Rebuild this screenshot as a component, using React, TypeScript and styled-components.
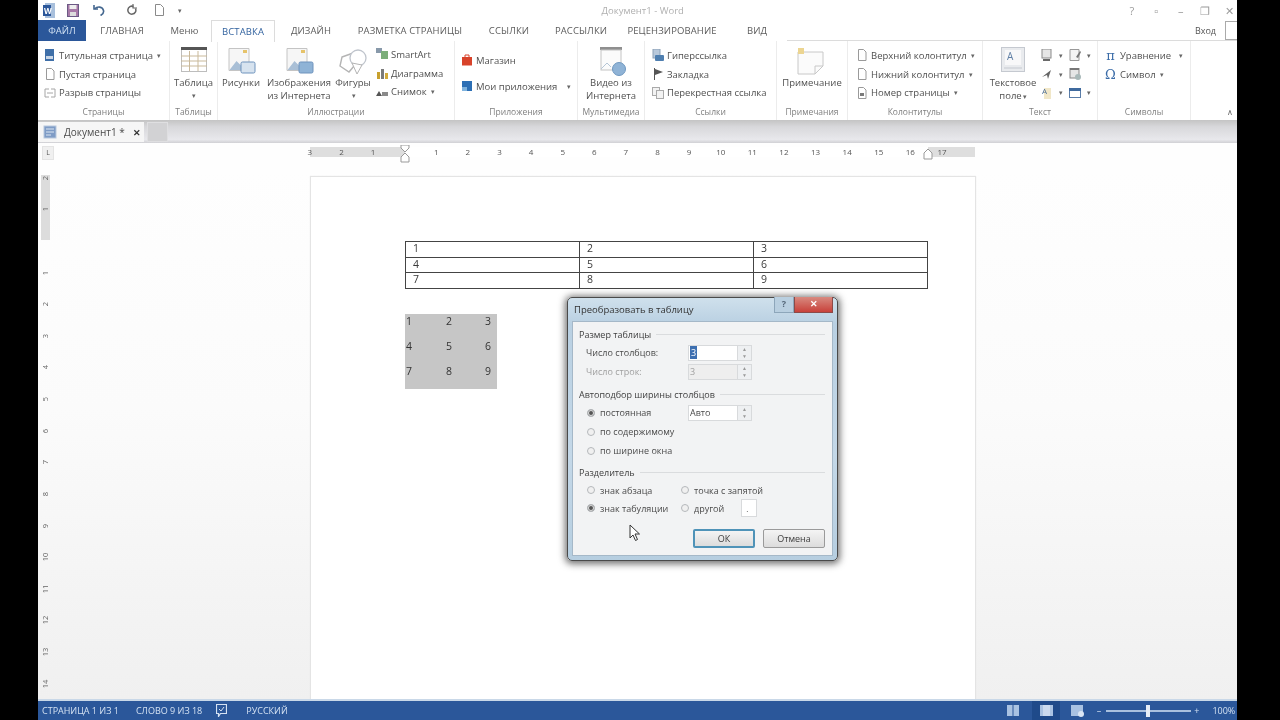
import React from "react";
import styled, { createGlobalStyle } from "styled-components";

const Global = createGlobalStyle`
  html, body { margin: 0; padding: 0; background: #000; overflow: hidden; }
  * { box-sizing: border-box; }
`;

const Screen = styled.div`
  width: 1280px; height: 720px; background: #000; padding-left: 38px; overflow: hidden;
  font-family: "Open Sans", "Liberation Sans", sans-serif;
`;
const Win = styled.div`
  position: relative; width: 1199px; height: 720px; background: #fff; display: flex; flex-direction: column;
  overflow: hidden; filter: blur(0.7px); color: #555;
`;

/* title bar */
const TitleBar = styled.div`height: 20px; display: flex; align-items: center; flex: none; background: #fff; position: relative;`;
const Qat = styled.div`display: flex; align-items: center; height: 20px;`;
const QatSlot = styled.div<{ $w: number }>`width: ${p => p.$w}px; display: flex; justify-content: center; align-items: center;`;
const DocTitle = styled.div`flex: 1; text-align: center; font-size: 9.5px; color: #b0b0b0; padding-right: 26px;`;
const WinBtns = styled.div`display: flex; align-items: center; color: #9c9c9c; font-size: 11px; margin-right: -5px;`;
const WinBtn = styled.div`width: 24.5px; display: flex; justify-content: center;`;

/* tabs */
const TabBar = styled.div`height: 21px; display: flex; flex: none; position: relative; background: #fff; border-bottom: 1px solid #dcdcdc;`;
const FileTab = styled.div`width: 48px; height: 21px; background: #2b579a; color: #cfe0f3; font-size: 9.5px; display: flex; align-items: center; justify-content: center;`;
const Tab = styled.div<{ $w: number; $active?: boolean }>`
  width: ${p => p.$w}px; height: ${p => (p.$active ? 22 : 21)}px; display: flex; align-items: center; justify-content: center;
  font-size: 9.5px; color: #5c5c5c; letter-spacing: .1px; white-space: nowrap;
  background: #fff; z-index: 1;
  ${p => p.$active ? "border: 1px solid #dcdcdc; border-bottom: none; color: #33639f;" : ""}
`;
const SignIn = styled.div`margin-left: auto; display: flex; align-items: center; font-size: 9px; color: #555; gap: 9px;`;
const Avatar = styled.div`width: 12px; height: 19px; border: 1px solid #aaa; border-right: none; background: #fff;`;

/* ribbon */
const Ribbon = styled.div`height: 79px; flex: none; display: flex; background: #fff;`;
const Group = styled.div<{ $w: number; $plain?: boolean }>`
  width: ${p => p.$w}px; flex: none; display: flex; flex-direction: column; height: 79px;
  border-right: ${p => (p.$plain ? "none" : "1px solid #ececec")};
`;
const GroupBody = styled.div<{ $pt?: number; $pl?: number }>`
  height: 63px; display: flex; padding-top: ${p => p.$pt ?? 4}px; padding-left: ${p => p.$pl ?? 0}px;
`;
const GroupLabel = styled.div`height: 16px; text-align: center; font-size: 8.5px; color: #808080; line-height: 15px; white-space: nowrap;`;
const Collapse = styled.div`height: 16px; text-align: right; padding-right: 4px; font-size: 8px; color: #666; line-height: 15px;`;
const RowStack = styled.div<{ $gap?: number; $pl?: number }>`
  display: flex; flex-direction: column; gap: ${p => p.$gap ?? 0}px; padding-left: ${p => p.$pl ?? 0}px;
`;
const SmallRow = styled.div`height: 18.7px; display: flex; align-items: center; gap: 3px; font-size: 9.5px; color: #505050; white-space: nowrap;`;
const Caret = styled.span`font-size: 7px; color: #666; margin-left: 1px;`;
const Big = styled.div<{ $w: number }>`
  width: ${p => p.$w}px; flex: none; display: flex; flex-direction: column; align-items: center;
  font-size: 9.5px; line-height: 13px; color: #505050; text-align: center; white-space: nowrap;
`;
const BigIcon = styled.div`height: 31px; padding-top: 2px; display: flex; align-items: flex-start; justify-content: center;`;
const BigText = styled.div`line-height: 13px;`;
const MiniCol = styled.div<{ $w: number }>`display: flex; flex-direction: column; width: ${p => p.$w}px; padding-top: 1px;`;
const MiniCell = styled.div`height: 18.7px; display: flex; align-items: center; gap: 5px;`;
const MathGlyph = styled.span`font-family: "DejaVu Serif", serif; font-size: 13px; color: #3b6ca8; width: 13px; text-align: center;`;

/* doc tabs */
const DocTabs = styled.div`
  height: 23px; flex: none; display: flex; align-items: flex-end; gap: 3px;
  background: linear-gradient(#c4c4c4 0, #d8d8db 30%, #e8e8ec 85%, #d0d0d4 100%); padding-bottom: 1px;
`;
const DocTab = styled.div`width: 106px; height: 20px; background: #f6f6f6; display: flex; align-items: center; padding-left: 5px; gap: 7px; font-size: 10px; color: #4a4a4a;`;
const DocClose = styled.span`font-size: 9px; margin-left: 1px; color: #333; font-weight: 700;`;
const NewTab = styled.div`width: 21px; height: 20px; background: #d2d2d4; border: 1px solid #dfdfe1;`;

/* ruler */
const RulerRow = styled.div`height: 27px; flex: none; display: flex; background: #fefefe;`;
const Corner = styled.div`width: 12px; height: 14px; margin: 3px 0 0 4px; background: #f0f0f0; border: 1px solid #e4e4e4; font-size: 7px; color: #555; text-align: center; line-height: 11px;`;
const Track = styled.div`
  margin: 4px 0 0 256px; width: 665px; height: 10px; display: flex; position: relative;
  background: linear-gradient(90deg, #dedede 0 95px, #fff 95px 618px, #dedede 618px);
`;
const TrackCells = styled.div`display: flex; margin-left: -16px;`;
const RCell = styled.div`width: 31.62px; text-align: center; font-size: 8px; line-height: 10px; color: #555; flex: none;`;
const Indent = styled.svg`position: absolute; left: 89px; top: -2px;`;
const Indent2 = styled.svg`position: absolute; left: 613px; top: 1px;`;

/* workspace */
const Workspace = styled.div`
  flex: 1; min-height: 0; display: flex; overflow: hidden; background: linear-gradient(#fefefe 0, #fbfbfb 45%, #f0f0f0 100%);
`;
const VRuler = styled.div`width: 17px; flex: none; margin: -8px 256px 0 0; position: relative;`;
const VGray = styled.div`position: absolute; left: 3px; top: 13px; width: 9px; height: 65px; background: #dcdcdc;`;
const VCell = styled.div`
  height: 31.62px; display: flex; align-items: center; justify-content: center; position: relative; width: 13px; margin-left: 1px;
  font-size: 7.5px; color: #666;
`;
const VText = styled.span`transform: rotate(-90deg); display: block;`;
const Page = styled.div`
  width: 664px; height: 560px; margin-top: 7px; background: #fff; flex: none; padding: 64px 0 0 94px;
  box-shadow: 0 0 1px 1px #e4e4e4; color: #333;
`;
const DocTable = styled.div`
  width: 523px; height: 47.5px; display: grid; grid-template-columns: repeat(3, 1fr); grid-template-rows: repeat(3, 1fr);
  border-top: 1.5px solid #444; border-left: 1.5px solid #444;
`;
const DocCell = styled.div`
  border-right: 1.5px solid #444; border-bottom: 1.5px solid #444; padding-left: 7px; font-size: 10.5px; line-height: 13px; color: #3a3a3a;
`;
const Selection = styled.div`
  width: 92px; height: 75px; margin-top: 25px; background: #c6c6c6; display: grid;
  grid-template-columns: 40px 39px 13px; grid-auto-rows: 25px; font-size: 10.5px; line-height: 14px; color: #333;
`;
const SelCell = styled.div`padding-left: 1px;`;

/* status */
const Status = styled.div`
  height: 21px; flex: none; background: #2b579a; border-top: 2px solid #c9d8e8; display: flex; align-items: center;
  color: #d3e1f2; font-size: 9px; padding-left: 4px; white-space: nowrap;
`;
const StatusItem = styled.div<{ $ml?: number }>`margin-left: ${p => p.$ml ?? 0}px; display: flex; align-items: center;`;
const ViewBtn = styled.div<{ $on?: boolean; $w: number }>`
  width: ${p => p.$w}px; height: 19px; display: flex; align-items: center; justify-content: center;
  background: ${p => (p.$on ? "#1f4a8a" : "transparent")};
`;
const Slider = styled.div`width: 85px; height: 2px; background: #a9c0de; position: relative; margin: 0 3px;`;
const Thumb = styled.div`position: absolute; left: 40px; top: -5px; width: 4px; height: 12px; background: #e6edf6;`;

/* dialog */
const Dialog = styled.div`
  position: absolute; left: 529px; top: 297px; width: 271px; height: 264px; border-radius: 5px;
  background: linear-gradient(#cfe0ec, #b9d0e2 10%, #c4d8e8 60%, #b6cee0);
  border: 1px solid #4a4a4a; padding: 0 4px 4px;
  box-shadow: 0 1px 7px 2px rgba(40,40,40,.65); display: flex; flex-direction: column;
`;
const DlgTitle = styled.div`height: 23px; flex: none; display: flex; align-items: center; font-size: 9.5px; color: #333; padding: 0 0 0 2px; position: relative;`;
const DlgBtns = styled.div`position: absolute; right: 0; top: -1px; display: flex;`;
const HelpBtn = styled.div`width: 20px; height: 16px; background: #b9cfe0; border: 1px solid #8da6ba; border-top: none; font-size: 9px; text-align: center; color: #56687a; font-weight: 700; line-height: 14px;`;
const CloseBtn = styled.div`width: 39px; height: 16px; background: linear-gradient(#d88a80, #c8413a); border: 1px solid #8c4a48; border-top: none; color: #fff; font-size: 9px; text-align: center; font-weight: 700; line-height: 14px;`;
const DlgBody = styled.div`flex: 1; background: #f2f3f4; border: 1px solid #a5b8c8; padding: 3px 7px 0 6px; display: flex; flex-direction: column; font-size: 9px; color: #4a4a4a;`;
const Heading = styled.div<{ $mt?: number }>`
  height: 18px; margin-top: ${p => p.$mt ?? 0}px; display: flex; align-items: center; gap: 5px; font-size: 9px; color: #404040; white-space: nowrap;
  &::after { content: ""; flex: 1; height: 1px; background: #dadcde; }
`;
const DlgRow = styled.div<{ $h?: number; $muted?: boolean }>`
  height: ${p => p.$h ?? 19}px; display: flex; align-items: center; padding-left: 7px; white-space: nowrap;
  color: ${p => (p.$muted ? "#a0a0a0" : "#4a4a4a")};
`;
const FieldLabel = styled.div`width: 102px;`;
const Spin = styled.div<{ $muted?: boolean }>`
  width: 64px; height: 16px; display: flex; background: ${p => (p.$muted ? "#eeeeee" : "#fff")}; border: 1px solid #d8dadc; color: inherit; line-height: 14px; padding-left: 1px;
`;
const SpinText = styled.div`flex: 1; font-size: 9px;`;
const Caretbox = styled.span`background: #3d6fb0; color: #fff; padding: 0 1px;`;
const SpinArrows = styled.div`width: 14px; border-left: 1px solid #d8dadc; background: #eef0f2; color: #9a9a9a; font-size: 5px; line-height: 7px; text-align: center;`;
const RadioRow = styled.div<{ $w?: number }>`display: flex; align-items: center; gap: 5px; padding-left: 1px; ${p => (p.$w ? `width: ${p.$w}px;` : "")}`;
const Radio = styled.div<{ $on?: boolean }>`
  width: 8px; height: 8px; border-radius: 50%; border: 1px solid #b5b8bb; flex: none;
  background: ${p => (p.$on ? "#555" : "#f0f0f0")}; ${p => (p.$on ? "box-shadow: inset 0 0 0 1px #ddd;" : "")}
`;
const OtherBox = styled.div`width: 16px; height: 18px; margin-left: 17px; background: #fff; border: 1px solid #d8dadc; font-size: 8px; line-height: 18px; padding-left: 4px;`;
const DlgFoot = styled.div`display: flex; justify-content: flex-end; gap: 8px; margin-top: 12px; padding-right: 0;`;
const DlgButton = styled.div<{ $primary?: boolean }>`
  width: 62px; height: 19px; border-radius: 2px; font-size: 9px; color: #3c3c3c; display: flex; align-items: center; justify-content: center;
  background: linear-gradient(#f4f4f4, #dcdcdc); border: ${p => (p.$primary ? "2px solid #4f93b8" : "1px solid #9a9a9a")};
`;
const Pointer = styled.svg`position: absolute; left: 591px; top: 524px;`;

/* icons */
const Sv = ({ w = 12, h = 12, children }: { w?: number; h?: number; children: React.ReactNode }) => (
  <svg width={w} height={h} viewBox={`0 0 ${w} ${h}`} fill="none">{children}</svg>
);
const DocI = ({ c = "#9a9a9a", fill = "#fff" }: { c?: string; fill?: string }) => (
  <Sv><path d="M2.5 .5h5l2.5 2.5v8.5h-7.5z" fill={fill} stroke={c} /></Sv>
);
const CoverI = () => (
  <Sv><rect x="1" y="0" width="9" height="12" fill="#3f6fa8" /><rect x="2" y="7" width="7" height="3" fill="#c9d6e6" /></Sv>
);
const BreakI = () => (
  <Sv><path d="M5 2H1v8h4M7 2h4v8H7M3 6h6" stroke="#a6a6a6" /></Sv>
);
const PicBig = ({ badge }: { badge: string }) => (
  <Sv w={30} h={30}>
    <path d="M3 1.5h20v22h-20z" fill="#f6f6f6" stroke="#c4c4c4" />
    <rect x="17" y="3" width="4" height="3" fill="#e6c36a" />
    <path d="M3.5 23l7-9 5 5 3-3 4 7z" fill="#a9bfd6" />
    <rect x="15" y="15" width="14" height="11" rx="1.5" fill={badge} stroke="#6e93bd" />
  </Sv>
);
const TableBig = () => (
  <Sv w={26} h={26}>
    <rect x=".5" y=".5" width="25" height="24" fill="#fff" stroke="#bdbdbd" />
    <rect x="0" y="0" width="26" height="3" fill="#555" />
    <path d="M0 9h26M0 14h26M0 19h26M8.5 4v20M17 4v20" stroke="#c9b99a" />
  </Sv>
);
const ShapesBig = () => (
  <Sv w={30} h={30}>
    <path d="M4 10l14-5 3 8-10 12-9-6z" fill="#fff" stroke="#b4b4b4" strokeWidth="1.4" />
    <circle cx="20" cy="11" r="8" fill="#fff" stroke="#bfc4cc" strokeWidth="1.3" />
    <path d="M14 16l10 2-5 9z" fill="#fff" stroke="#b4b4b4" />
  </Sv>
);
const SmartI = () => (
  <Sv><rect x="0" y="0" width="6" height="5" fill="#89a" /><rect x="5" y="3" width="7" height="8" fill="#7cae7a" /></Sv>
);
const ChartI = () => (
  <Sv><rect x="1" y="5" width="3" height="7" fill="#c8a12e" /><rect x="5" y="2" width="3" height="10" fill="#7a7a7a" /><rect x="9" y="6" width="3" height="6" fill="#d2aa3a" /></Sv>
);
const ShotI = () => (
  <Sv><path d="M0 10l3-5 3 5z" fill="#555" /><rect x="6" y="6" width="6" height="4" fill="#8a8a8a" /></Sv>
);
const StoreI = () => (
  <Sv><path d="M1 3h10v8.5H1z" fill="#d8432a" /><path d="M4 3V1h4v2" stroke="#d8432a" /></Sv>
);
const AppsI = () => (
  <Sv><rect x="1" y="1" width="10" height="10" fill="#2c6fb5" /><rect x="1" y="7" width="5" height="4" fill="#7fb3de" /></Sv>
);
const VideoBig = () => (
  <Sv w={30} h={30}>
    <rect x="4" y="0" width="22" height="3" fill="#8f8f8f" />
    <rect x="5" y="3" width="20" height="20" fill="#fbfbfb" stroke="#c4c4c4" />
    <circle cx="23" cy="22" r="6.5" fill="#8fb3d6" stroke="#6f98c0" />
    <path d="M5 22l6-6 4 4" stroke="#b6c6d6" />
  </Sv>
);
const LinkI = () => (
  <Sv><rect x="1" y="0" width="7" height="9" fill="#b9c9db" stroke="#8da2b8" /><rect x="3" y="6" width="9" height="6" rx="1" fill="#4f7fb0" /></Sv>
);
const FlagI = () => (
  <Sv><path d="M2.5 0v12" stroke="#555" /><path d="M3 1l8 3-8 3z" fill="#555" /></Sv>
);
const CrossI = () => (
  <Sv><rect x=".5" y=".5" width="7" height="8" fill="#f3f3f3" stroke="#aaa" /><rect x="4.5" y="3.5" width="7" height="8" fill="#f3f3f3" stroke="#aaa" /></Sv>
);
const NoteBig = () => (
  <Sv w={30} h={30}>
    <path d="M1 5h25v14l-8 8H1z" fill="#fbfbfb" stroke="#c8c8c8" />
    <path d="M18 27v-8h8" stroke="#c8c8c8" />
    <rect x="1" y="1" width="6" height="6" fill="#ecd591" />
  </Sv>
);
const PageNumI = () => (
  <Sv><path d="M2.5 .5h5l2.5 2.5v8.5h-7.5z" fill="#fff" stroke="#9a9a9a" /><rect x="4" y="6" width="4" height="3" fill="#7a7a7a" /></Sv>
);
const TextBoxBig = () => (
  <Sv w={24} h={25}>
    <rect x=".5" y=".5" width="23" height="24" fill="#e9ebee" stroke="#c5c9d0" />
    <rect x="4" y="3" width="16" height="15" fill="#f8f8f9" />
    <text x="6" y="13" fontSize="10" fill="#5f7fa5" fontFamily="Open Sans">A</text>
    <path d="M3 21h18" stroke="#c5c9d0" />
  </Sv>
);
const BlockI = ({ c = "#8a8a8a" }: { c?: string }) => (
  <Sv><rect x="1" y="0" width="9" height="9" fill="#e6e6e6" stroke={c} /><rect x="2" y="10" width="7" height="2" fill="#6a6a6a" /></Sv>
);
const SigI = () => (
  <Sv><path d="M1 9l9-7-3 9-1-4z" fill="#666" /></Sv>
);
const ObjI = () => (
  <Sv><path d="M1 .5h9v11H1z" fill="#f4f4f4" stroke="#999" /><path d="M7 8l4-6 1 1-3 6z" fill="#777" /></Sv>
);
const CalI = () => (
  <Sv><rect x="1" y="0" width="9" height="10" fill="#e6e6e6" stroke="#888" /><rect x="1" y="0" width="9" height="2" fill="#777" /><circle cx="9" cy="9" r="3" fill="#a9b9b9" /></Sv>
);
const DropI = () => (
  <Sv><rect x="3" y="1" width="7" height="11" fill="#f1e7c8" /><text x="1" y="7" fontSize="8" fill="#4f6f95" fontFamily="Open Sans">A</text></Sv>
);
const DateI = () => (
  <Sv><rect x=".5" y="1.5" width="11" height="9" fill="#fff" stroke="#5a7da8" /><rect x="0" y="1" width="12" height="3" fill="#3f6a9e" /></Sv>
);
const WordI = () => (
  <Sv w={12} h={15}>
    <rect x="2" y="0" width="10" height="15" fill="#a9c0dc" />
    <rect x="0" y="2" width="8" height="11" fill="#2b579a" />
    <text x="1" y="10.5" fontSize="8" fontWeight="700" fill="#fff" fontFamily="Open Sans">W</text>
  </Sv>
);
const SaveI = () => (
  <Sv w={12} h={13}>
    <rect x=".5" y=".5" width="11" height="12" fill="#a87aa8" stroke="#6c5a85" />
    <rect x="2.5" y="1" width="7" height="4" fill="#eee" />
    <rect x="3" y="8" width="6" height="4" fill="#ddd" />
  </Sv>
);
const UndoI = () => (
  <Sv w={13} h={12}>
    <path d="M1 1v4h4" stroke="#44678f" strokeWidth="1.6" />
    <path d="M1.5 5c3-3 8-2.5 9 1.5.6 2.5-1 4-3 5" stroke="#44678f" strokeWidth="1.6" />
  </Sv>
);
const RedoI = () => (
  <Sv w={11} h={12}>
    <path d="M8.5 4.5a4 4 0 1 1-2-2" stroke="#666" strokeWidth="1.5" />
    <path d="M6 0v4h4" stroke="#666" strokeWidth="1.2" />
  </Sv>
);
const SmallDocI = () => (
  <Sv w={9} h={12}><path d="M.5 .5h5l3 3v8h-8z" fill="#fff" stroke="#8a8a8a" /></Sv>
);
const SpellI = () => (
  <Sv w={11} h={13}><path d="M.5 .5h10v9h-6l-2 3v-3h-2z" stroke="#d5e2f3" strokeWidth="1.2" /><path d="M3 5l2 2 3-4" stroke="#d5e2f3" /></Sv>
);
const ViewI = ({ kind }: { kind: number }) => (
  <Sv w={13} h={13}>
    <rect x="0" y="1" width={kind === 1 ? 13 : 12} height="11" fill="#a9c2e2" />
    {kind === 0 && <path d="M6 1v11" stroke="#2b579a" />}
    {kind === 1 && <rect x="3" y="1" width="7" height="11" fill="#cbdaee" />}
    {kind === 2 && <circle cx="10" cy="10" r="3" fill="#dbe6f4" />}
  </Sv>
);

const tabs: [string, number, boolean?][] = [
  ["ГЛАВНАЯ", 72], ["Меню", 53], ["ВСТАВКА", 64, true], ["ДИЗАЙН", 72], ["РАЗМЕТКА СТРАНИЦЫ", 126],
  ["ССЫЛКИ", 72], ["РАССЫЛКИ", 72], ["РЕЦЕНЗИРОВАНИЕ", 110], ["ВИД", 60],
];
const hNums = ["3", "2", "1", "", "1", "2", "3", "4", "5", "6", "7", "8", "9", "10", "11", "12", "13", "14", "15", "16", "17"];
const vNums = ["2", "1", "", "1", "2", "3", "4", "5", "6", "7", "8", "9", "10", "11", "12", "13", "14"];

export default function App() {
  return (
    <Screen>
      <Global />
      <Win>
        <TitleBar>
          <Qat>
            <QatSlot $w={22}><WordI /></QatSlot>
            <QatSlot $w={26}><SaveI /></QatSlot>
            <QatSlot $w={26}><UndoI /></QatSlot>
            <QatSlot $w={40}><RedoI /></QatSlot>
            <QatSlot $w={14}><SmallDocI /></QatSlot>
            <QatSlot $w={26}><Caret>▾</Caret></QatSlot>
          </Qat>
          <DocTitle>Документ1 - Word</DocTitle>
          <WinBtns>
            <WinBtn>?</WinBtn>
            <WinBtn>▫</WinBtn>
            <WinBtn>–</WinBtn>
            <WinBtn>❐</WinBtn>
            <WinBtn>✕</WinBtn>
          </WinBtns>
        </TitleBar>
        <TabBar>
          <FileTab>ФАЙЛ</FileTab>
          {tabs.map(([t, w, a]) => <Tab key={t} $w={w} $active={a}>{t}</Tab>)}
          <SignIn>Вход<Avatar /></SignIn>
        </TabBar>
        <Ribbon>
          <Group $w={132}>
            <GroupBody $pt={5} $pl={6}>
              <RowStack>
                <SmallRow><CoverI />Титульная страница<Caret>▾</Caret></SmallRow>
                <SmallRow><DocI />Пустая страница</SmallRow>
                <SmallRow><BreakI />Разрыв страницы</SmallRow>
              </RowStack>
            </GroupBody>
            <GroupLabel>Страницы</GroupLabel>
          </Group>
          <Group $w={48}>
            <GroupBody>
              <Big $w={47}><BigIcon><TableBig /></BigIcon><BigText>Таблица</BigText><Caret>▾</Caret></Big>
            </GroupBody>
            <GroupLabel>Таблицы</GroupLabel>
          </Group>
          <Group $w={237}>
            <GroupBody>
              <Big $w={46}><BigIcon><PicBig badge="#d7e3ef" /></BigIcon><BigText>Рисунки</BigText></Big>
              <Big $w={70}><BigIcon><PicBig badge="#8fb3d6" /></BigIcon><BigText>Изображения<br />из Интернета</BigText></Big>
              <Big $w={38}><BigIcon><ShapesBig /></BigIcon><BigText>Фигуры</BigText><Caret>▾</Caret></Big>
              <RowStack $pl={4}>
                <SmallRow><SmartI />SmartArt</SmallRow>
                <SmallRow><ChartI />Диаграмма</SmallRow>
                <SmallRow><ShotI />Снимок<Caret>▾</Caret></SmallRow>
              </RowStack>
            </GroupBody>
            <GroupLabel>Иллюстрации</GroupLabel>
          </Group>
          <Group $w={123}>
            <GroupBody $pt={10} $pl={6}>
              <RowStack $gap={7}>
                <SmallRow><StoreI />Магазин</SmallRow>
                <SmallRow><AppsI />Мои приложения<Caret>&nbsp;&nbsp;&nbsp;▾</Caret></SmallRow>
              </RowStack>
            </GroupBody>
            <GroupLabel>Приложения</GroupLabel>
          </Group>
          <Group $w={67}>
            <GroupBody>
              <Big $w={66}><BigIcon><VideoBig /></BigIcon><BigText>Видео из<br />Интернета</BigText></Big>
            </GroupBody>
            <GroupLabel>Мультимедиа</GroupLabel>
          </Group>
          <Group $w={132}>
            <GroupBody $pt={5} $pl={7}>
              <RowStack>
                <SmallRow><LinkI />Гиперссылка</SmallRow>
                <SmallRow><FlagI />Закладка</SmallRow>
                <SmallRow><CrossI />Перекрестная ссылка</SmallRow>
              </RowStack>
            </GroupBody>
            <GroupLabel>Ссылки</GroupLabel>
          </Group>
          <Group $w={71}>
            <GroupBody>
              <Big $w={70}><BigIcon><NoteBig /></BigIcon><BigText>Примечание</BigText></Big>
            </GroupBody>
            <GroupLabel>Примечания</GroupLabel>
          </Group>
          <Group $w={135}>
            <GroupBody $pt={5} $pl={8}>
              <RowStack>
                <SmallRow><DocI />Верхний колонтитул<Caret>▾</Caret></SmallRow>
                <SmallRow><DocI />Нижний колонтитул<Caret>▾</Caret></SmallRow>
                <SmallRow><PageNumI />Номер страницы<Caret>▾</Caret></SmallRow>
              </RowStack>
            </GroupBody>
            <GroupLabel>Колонтитулы</GroupLabel>
          </Group>
          <Group $w={115}>
            <GroupBody $pl={2}>
              <Big $w={56}><BigIcon><TextBoxBig /></BigIcon><BigText>Текстовое<br />поле<Caret>▾</Caret></BigText></Big>
              <MiniCol $w={28}>
                <MiniCell><BlockI /><Caret>▾</Caret></MiniCell>
                <MiniCell><SigI /><Caret>▾</Caret></MiniCell>
                <MiniCell><DropI /><Caret>▾</Caret></MiniCell>
              </MiniCol>
              <MiniCol $w={26}>
                <MiniCell><ObjI /><Caret>▾</Caret></MiniCell>
                <MiniCell><CalI /></MiniCell>
                <MiniCell><DateI /><Caret>▾</Caret></MiniCell>
              </MiniCol>
            </GroupBody>
            <GroupLabel>Текст</GroupLabel>
          </Group>
          <Group $w={93}>
            <GroupBody $pt={5} $pl={6}>
              <RowStack>
                <SmallRow><MathGlyph>π</MathGlyph>Уравнение<Caret>&nbsp;&nbsp;▾</Caret></SmallRow>
                <SmallRow><MathGlyph>Ω</MathGlyph>Символ<Caret>▾</Caret></SmallRow>
              </RowStack>
            </GroupBody>
            <GroupLabel>Символы</GroupLabel>
          </Group>
          <Group $w={46} $plain>
            <GroupBody />
            <Collapse>∧</Collapse>
          </Group>
        </Ribbon>
        <DocTabs>
          <DocTab>
            <Sv w={14} h={14}><rect x="1" y="1" width="12" height="12" fill="#7f9cc6" stroke="#b8c8dd" /><path d="M3 4h8M3 7h8M3 10h5" stroke="#dce6f2" /></Sv>
            Документ1 *<DocClose>✕</DocClose>
          </DocTab>
          <NewTab />
        </DocTabs>
        <RulerRow>
          <Corner>L</Corner>
          <Track>
            <TrackCells>
              {hNums.map((n, i) => <RCell key={i}>{n}</RCell>)}
            </TrackCells>
            <Indent width="12" height="18" viewBox="0 0 12 18" fill="none">
              <path d="M2 0h8v3l-4 4-4-4z M6 8l4 4v5H2v-5z" fill="#fff" stroke="#999" />
            </Indent>
            <Indent2 width="10" height="12" viewBox="0 0 10 12" fill="none">
              <path d="M5 1l4 4v6H1V5z" fill="#fff" stroke="#999" />
            </Indent2>
          </Track>
        </RulerRow>
        <Workspace>
          <VRuler>
            <VGray />
            {vNums.map((n, i) => <VCell key={i}><VText>{n}</VText></VCell>)}
          </VRuler>
          <Page>
            <DocTable>
              {["1", "2", "3", "4", "5", "6", "7", "8", "9"].map(n => <DocCell key={n}>{n}</DocCell>)}
            </DocTable>
            <Selection>
              {["1", "2", "3", "4", "5", "6", "7", "8", "9"].map(n => <SelCell key={n}>{n}</SelCell>)}
            </Selection>
          </Page>
        </Workspace>
        <Status>
          <StatusItem>СТРАНИЦА 1 ИЗ 1</StatusItem>
          <StatusItem $ml={17}>СЛОВО 9 ИЗ 18</StatusItem>
          <StatusItem $ml={14}><SpellI /></StatusItem>
          <StatusItem $ml={19}>РУССКИЙ</StatusItem>
          <StatusItem $ml={713}><ViewBtn $w={26}><ViewI kind={0} /></ViewBtn></StatusItem>
          <StatusItem $ml={5.5}><ViewBtn $w={28} $on><ViewI kind={1} /></ViewBtn></StatusItem>
          <StatusItem $ml={9}><ViewBtn $w={16}><ViewI kind={2} /></ViewBtn></StatusItem>
          <StatusItem $ml={11.5}>–</StatusItem>
          <StatusItem $ml={2}><Slider><Thumb /></Slider></StatusItem>
          <StatusItem>+</StatusItem>
          <StatusItem $ml={13}>100%</StatusItem>
        </Status>
        <Dialog>
          <DlgTitle>
            Преобразовать в таблицу
            <DlgBtns><HelpBtn>?</HelpBtn><CloseBtn>✕</CloseBtn></DlgBtns>
          </DlgTitle>
          <DlgBody>
            <Heading>Размер таблицы</Heading>
            <DlgRow>
              <FieldLabel>Число столбцов:</FieldLabel>
              <Spin><SpinText><Caretbox>3</Caretbox></SpinText><SpinArrows>▲<br />▼</SpinArrows></Spin>
            </DlgRow>
            <DlgRow $muted>
              <FieldLabel>Число строк:</FieldLabel>
              <Spin $muted><SpinText>3</SpinText><SpinArrows>▲<br />▼</SpinArrows></Spin>
            </DlgRow>
            <Heading $mt={4}>Автоподбор ширины столбцов</Heading>
            <DlgRow>
              <FieldLabel><RadioRow><Radio $on />постоянная</RadioRow></FieldLabel>
              <Spin><SpinText>Авто</SpinText><SpinArrows>▲<br />▼</SpinArrows></Spin>
            </DlgRow>
            <DlgRow><RadioRow><Radio />по содержимому</RadioRow></DlgRow>
            <DlgRow><RadioRow><Radio />по ширине окна</RadioRow></DlgRow>
            <Heading $mt={3}>Разделитель</Heading>
            <DlgRow $h={18}>
              <RadioRow $w={94}><Radio />знак абзаца</RadioRow>
              <RadioRow><Radio />точка с запятой</RadioRow>
            </DlgRow>
            <DlgRow $h={18}>
              <RadioRow $w={94}><Radio $on />знак табуляции</RadioRow>
              <RadioRow><Radio />другой</RadioRow>
              <OtherBox>.</OtherBox>
            </DlgRow>
            <DlgFoot>
              <DlgButton $primary>ОК</DlgButton>
              <DlgButton>Отмена</DlgButton>
            </DlgFoot>
          </DlgBody>
        </Dialog>
        <Pointer width="12" height="18" viewBox="0 0 12 18" fill="none">
          <path d="M1 1v13l3-3 2.5 5.5 2-1L6 10h4.5z" fill="#fff" stroke="#333" />
        </Pointer>
      </Win>
    </Screen>
  );
}
